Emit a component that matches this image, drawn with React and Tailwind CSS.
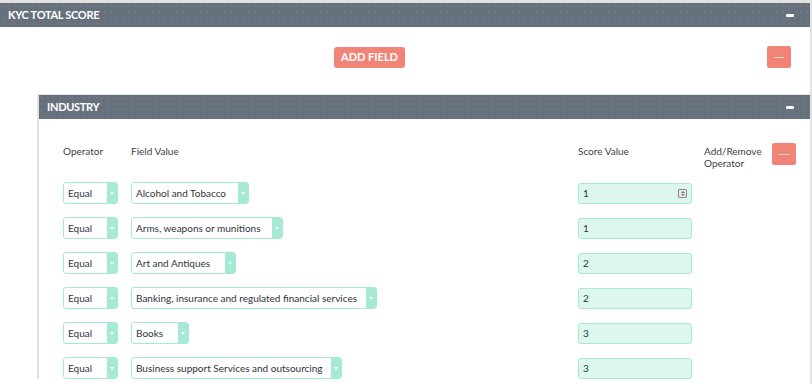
import React from 'react'

const rows = [
  { field: 'Alcohol and Tobacco', w: 'w-[118px]', score: '1', spin: true },
  { field: 'Arms, weapons or munitions', w: 'w-[152px]', score: '1' },
  { field: 'Art and Antiques', w: 'w-[105px]', score: '2' },
  { field: 'Banking, insurance and regulated financial services', w: 'w-[246px]', score: '2' },
  { field: 'Books', w: 'w-[58px]', score: '3' },
  { field: 'Business support Services and outsourcing', w: 'w-[211px]', score: '3' },
]

const dots =
  'bg-[radial-gradient(circle,rgba(255,255,255,0.1)_0.6px,transparent_0.8px)] bg-[length:6px_6px]'

function Bar({ title }) {
  return (
    <div className={`h-[24px] bg-[#66717d] ${dots} flex items-center justify-between pl-[8px] pr-[16px]`}>
      <span className="text-white font-bold text-[11px] tracking-[-0.3px]">{title}</span>
      <span className="w-[8px] h-[3px] rounded-[1px] bg-white" />
    </div>
  )
}

function Select({ label, w }) {
  return (
    <div className={`${w} h-[22px] flex border border-[#a6e9d4] rounded-[3px] bg-white overflow-hidden`}>
      <span className="flex-1 flex items-center pl-[4px] text-[10px] text-[#2e3440] whitespace-nowrap">{label}</span>
      <span className="w-[10px] bg-[#a6e9d4] flex items-center justify-center">
        <span className="border-l-[2.5px] border-r-[2.5px] border-t-[3px] border-l-transparent border-r-transparent border-t-white" />
      </span>
    </div>
  )
}

function MinusBtn({ cls }) {
  return (
    <div className={`w-[24px] h-[22px] bg-[#f28477] rounded-[2px] flex items-center justify-center ${cls}`}>
      <span className="w-[10px] h-px bg-[#d8d8d8]" />
    </div>
  )
}

export default function App() {
  return (
    <div className="w-[812px] h-[384px] overflow-hidden bg-white font-['Lato',sans-serif] border-t-[3px] border-[#e2e2e2]">
      <div className="border-r-2 border-[#e2e2e2] h-full">
        <Bar title="KYC TOTAL SCORE" />
        <div className="flex items-center pt-[19px]">
          <button className="ml-[334px] w-[71px] h-[21px] bg-[#f28477] rounded-[3px] text-white font-bold text-[11px]">
            ADD FIELD
          </button>
          <MinusBtn cls="ml-auto mr-[19px]" />
        </div>
        <div className="ml-[37px] mt-[26px] border-l-2 border-t border-[#e2e2e2]">
          <Bar title="INDUSTRY" />
          <div className="pl-[24px] pt-[24px] text-[10px] text-[#3a3f4b]">
            <div className="flex items-start leading-[12px]">
              <span className="w-[68px] pt-[2px]">Operator</span>
              <span className="w-[447px] pt-[2px]">Field Value</span>
              <span className="w-[126px] pt-[2px]">Score Value</span>
              <span className="w-[68px] pt-[2px]">Add/Remove<br />Operator</span>
              <MinusBtn cls="" />
            </div>
            <div className="flex flex-col gap-[13px] mt-[13px]">
              {rows.map((r, i) => (
                <div key={i} className="flex items-center h-[22px]">
                  <div className="w-[68px]"><Select label="Equal" w="w-[55px]" /></div>
                  <div className="w-[447px]"><Select label={r.field} w={r.w} /></div>
                  <div className="w-[114px] h-[21px] bg-[#ddf7ef] border border-[#a6e9d4] rounded-[3px] flex items-center justify-between pl-[4px] pr-[4px] text-[10px] text-[#2e3440]">
                    <span>{r.score}</span>
                    {r.spin && (
                      <span className="w-[9px] h-[9px] border border-[#8a8a8a] rounded-[1px] flex flex-col items-center justify-center gap-px bg-[#e8e8e8]">
                        <span className="border-l-[2px] border-r-[2px] border-b-[2px] border-l-transparent border-r-transparent border-b-[#777]" />
                        <span className="border-l-[2px] border-r-[2px] border-t-[2px] border-l-transparent border-r-transparent border-t-[#777]" />
                      </span>
                    )}
                  </div>
                </div>
              ))}
            </div>
          </div>
        </div>
      </div>
    </div>
  )
}
